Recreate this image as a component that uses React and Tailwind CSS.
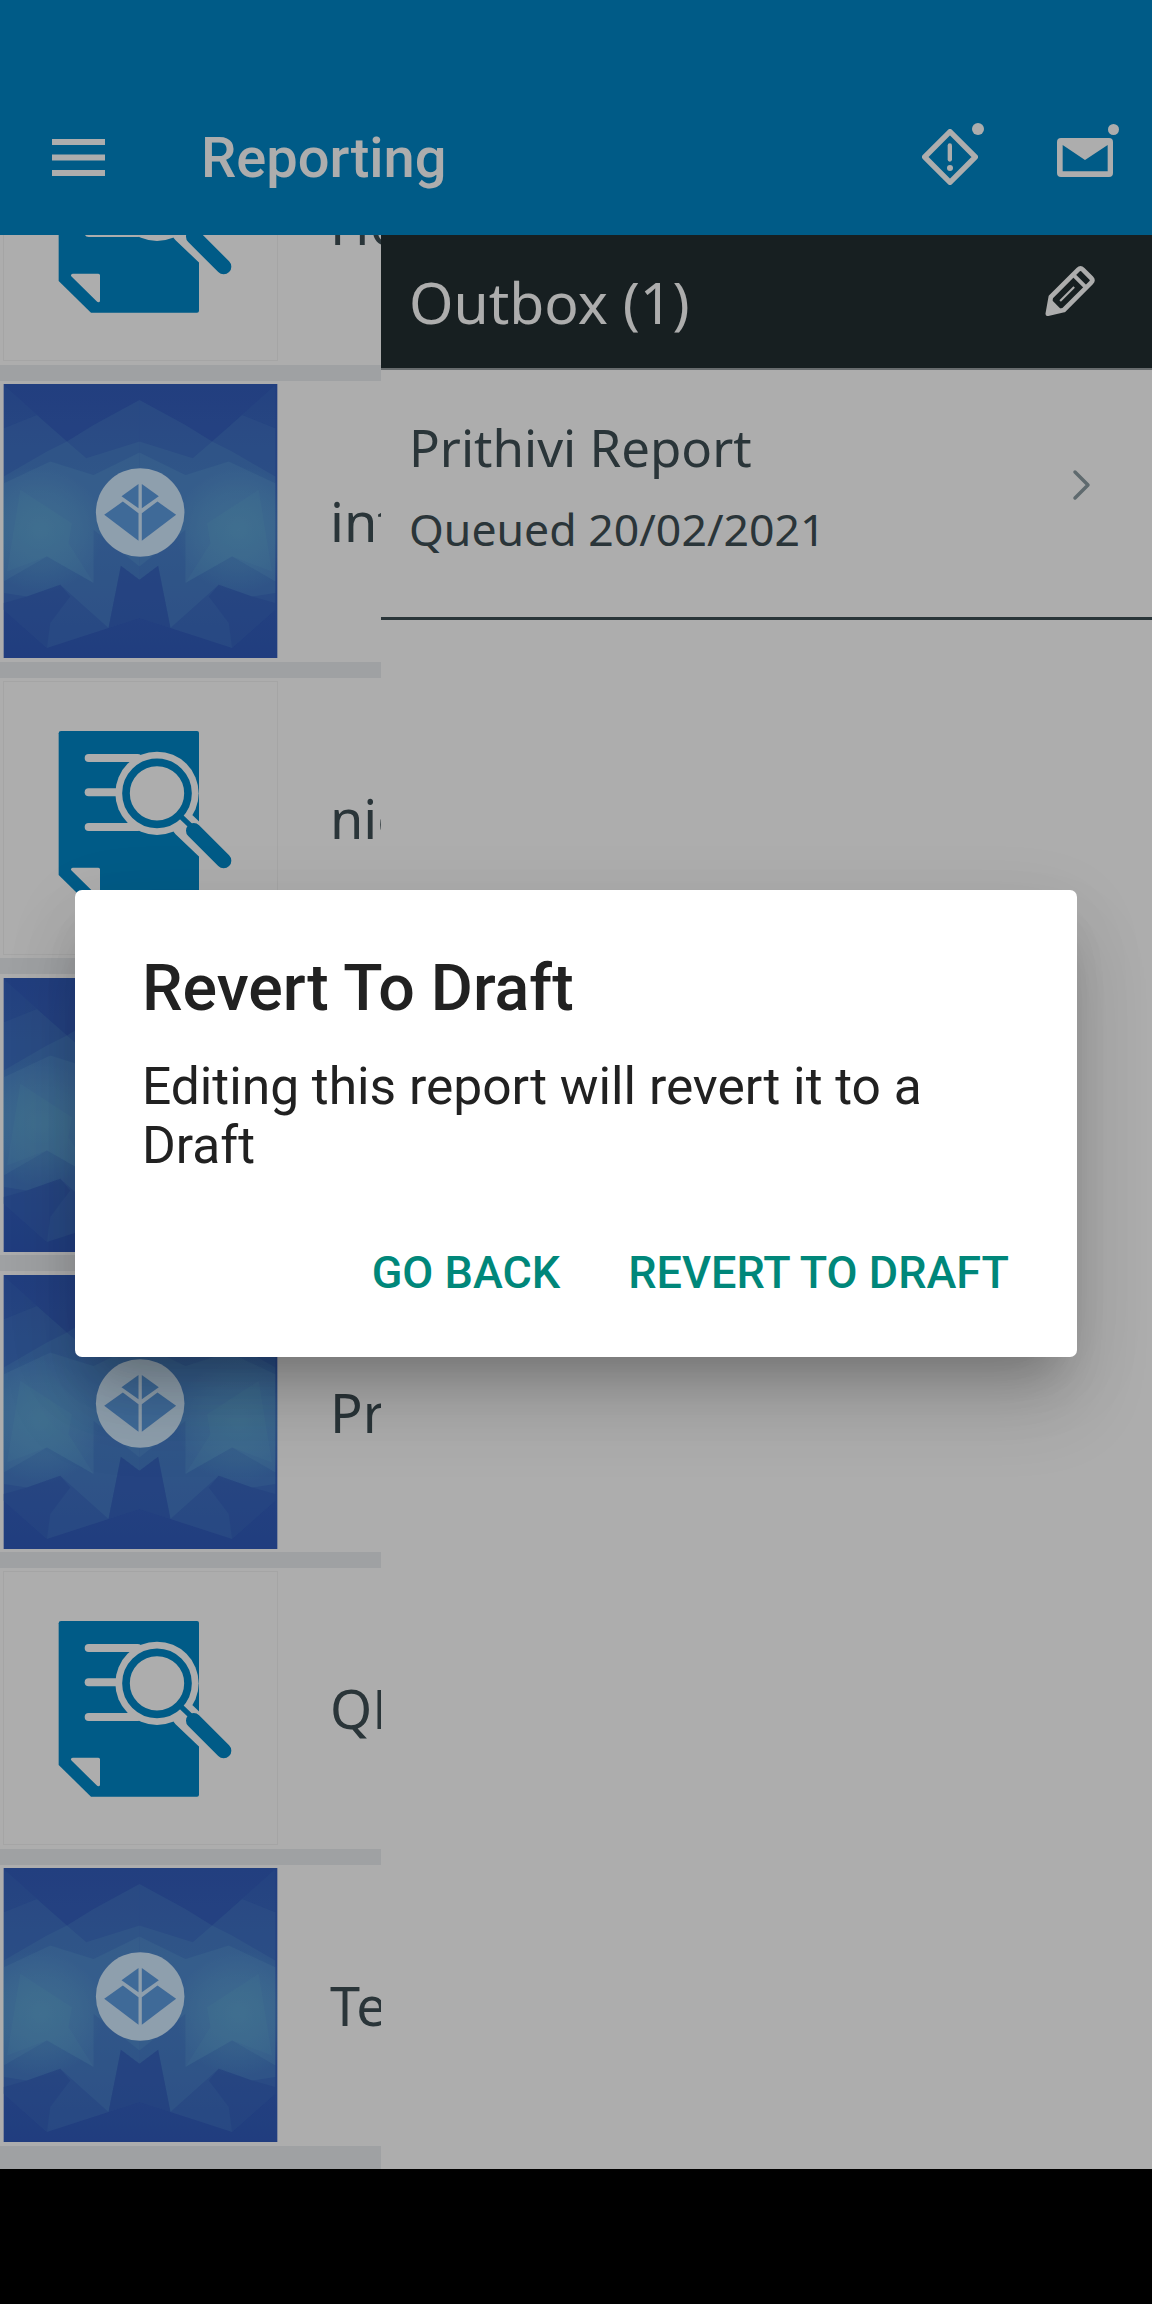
const BG = "#0087c7";

function rowsData() {
  return [
    { kind: "doc", name: "Home Report" },
    { kind: "img", name: "internal" },
    { kind: "doc", name: "nick" },
    { kind: "img", name: "Mine" },
    { kind: "img", name: "Prithivi" },
    { kind: "doc", name: "QR Report" },
    { kind: "img", name: "Test" },
  ];
}

const FACETS = [
  { p: "418,60 280,135 200,185 110,105 10,145 10,690 140,805 325,745 418,715", f: "#7fd0e8", o: 0.13 },
  { p: "418,185 258,235 200,185 140,215 10,290 10,640 80,650 180,615 325,745 362,558 418,600", f: "#7fd0e8", o: 0.13 },
  { p: "418,218 280,285 150,245 10,310 10,605 140,530 280,610 280,450 418,560", f: "#7fd0e8", o: 0.14 },
  { p: "20,575 60,330 215,430 205,490 280,610 140,530", f: "#7fd8e0", o: 0.08 },
  { p: "418,600 362,558 325,745 418,715", f: "#2f56b8", o: 0.45 },
  { p: "10,690 140,805 150,730 210,650 180,615 80,650 10,670", f: "#2f56b8", o: 0.35 },
  { p: "10,15 200,185 110,105 10,145", f: "#7fd0e8", o: 0.05 },
];

function Cover() {
  return (
    <svg viewBox="10 12 822 823" className="w-[275px] h-[274px] block shrink-0">
      <defs>
        <linearGradient id="covbase" x1="0" y1="0" x2="0" y2="1">
          <stop offset="0" stopColor="#335dbc" />
          <stop offset="0.5" stopColor="#3a68c2" />
          <stop offset="1" stopColor="#315bbb" />
        </linearGradient>
        <radialGradient id="covglow">
          <stop offset="0" stopColor="#7fd8e0" stopOpacity="0.26" />
          <stop offset="0.6" stopColor="#7fd8e0" stopOpacity="0.14" />
          <stop offset="1" stopColor="#7fd8e0" stopOpacity="0" />
        </radialGradient>
      </defs>
      <rect x="10" y="12" width="822" height="823" fill="url(#covbase)" />
      {FACETS.map((f, i) => (
        <polygon key={i} points={f.p} fill={f.f} fillOpacity={f.o} />
      ))}
      <g transform="translate(836 0) scale(-1 1)">
        {FACETS.map((f, i) => (
          <polygon key={i} points={f.p} fill={f.f} fillOpacity={f.o} />
        ))}
      </g>
      <ellipse cx="120" cy="450" rx="190" ry="190" fill="url(#covglow)" />
      <ellipse cx="716" cy="450" rx="190" ry="190" fill="url(#covglow)" />
      <circle cx="420" cy="398" r="133" fill="#d2eaff" />
      <g fill="#5d9ce0">
        <polygon points="364,349 415,312 415,385" />
        <polygon points="476,349 425,312 425,385" />
        <polygon points="312,405 368,365 415,400 415,483" />
        <polygon points="528,405 472,365 425,400 425,483" />
      </g>
    </svg>
  );
}

function DocIcon() {
  const bg = "#ffffff";
  return (
    <svg viewBox="0 0 600 660" className="w-[200px] h-[220px] block">
      <path d="M60 63H468q6 0 6 6V584q0 6-6 6H150L53 495V70q0-7 7-7z" fill={BG} />
      <polygon points="95,478 172,478 172,554" fill={bg} stroke={bg} strokeWidth="10" strokeLinejoin="round" />
      <g stroke={bg} strokeWidth="24" strokeLinecap="round">
        <line x1="143" y1="144" x2="290" y2="144" />
        <line x1="143" y1="247" x2="250" y2="247" />
        <line x1="143" y1="351" x2="290" y2="351" />
      </g>
      <circle cx="348" cy="250" r="125" fill={bg} />
      <line x1="430" y1="345" x2="545" y2="455" stroke={bg} strokeWidth="76" strokeLinecap="round" />
      <circle cx="348" cy="250" r="93" fill="none" stroke={BG} strokeWidth="23" />
      <line x1="420" y1="320" x2="460" y2="358" stroke={BG} strokeWidth="16" />
      <line x1="458" y1="362" x2="548" y2="452" stroke={BG} strokeWidth="46" strokeLinecap="round" />
    </svg>
  );
}

function Row({ item, last }) {
  return (
    <div className="flex flex-col shrink-0">
      <div className="h-[280.8px] flex items-center pl-[3px] shrink-0">
        {item.kind === "img" ? (
          <Cover />
        ) : (
          <div className="w-[275px] h-[274px] border border-[#f3f3f3] flex items-center justify-center shrink-0">
            <div className="mt-[4px]">
              <DocIcon />
            </div>
          </div>
        )}
        <span className="ml-[52px] shrink-0 whitespace-nowrap text-[54px] leading-[60px] text-[#3e4e54] font-['Noto_Sans',sans-serif]">
          {item.name}
        </span>
      </div>
      <div className={`${last ? "h-[24px]" : "h-[16px]"} bg-[#ebedf0]`} />
    </div>
  );
}

function Hamburger() {
  return (
    <svg viewBox="0 0 53 37" className="w-[53px] h-[37px] block" fill="#ffffff">
      <rect x="0" y="0" width="53" height="6" />
      <rect x="0" y="15.5" width="53" height="6" />
      <rect x="0" y="31" width="53" height="6" />
    </svg>
  );
}

function AlertIcon() {
  return (
    <div className="relative w-[56px] h-[56px]">
      <svg viewBox="187 87 168 168" className="w-[56px] h-[56px] block">
        <polygon points="271,95 347,171 271,247 195,171" fill="none" stroke="#ffffff" strokeWidth="16" strokeLinejoin="round" />
        <rect x="264" y="130" width="13" height="55" rx="6.5" fill="#ffffff" />
        <circle cx="271" cy="204" r="9" fill="#ffffff" />
      </svg>
      <span className="absolute left-[50px] top-[-6px] w-[11.5px] h-[11.5px] rounded-full bg-white" />
    </div>
  );
}

function MailIcon() {
  return (
    <div className="relative w-[56px] h-[39px]">
      <svg viewBox="590 112 168 117" className="w-[56px] h-[39px] block">
        <path
          fillRule="evenodd"
          fill="#ffffff"
          d="M602 112H746Q758 112 758 124V217Q758 229 746 229H602Q590 229 590 217V124Q590 112 602 112ZM607 133V212H742V133L674 178Z"
        />
      </svg>
      <span className="absolute right-[-6px] top-[-14px] w-[11.5px] h-[11.5px] rounded-full bg-white" />
    </div>
  );
}

function PencilIcon() {
  return (
    <svg viewBox="553 497 152 153" className="w-[51px] h-[51px] block mb-[22px]">
      <path
        d="M561 643L570 593L652 511Q659 504 666 511L691 536Q698 543 691 550L609 632Z"
        fill="none"
        stroke="#ffffff"
        strokeWidth="14"
        strokeLinejoin="round"
      />
      <line x1="637" y1="526" x2="676" y2="565" stroke="#ffffff" strokeWidth="12" />
      <polygon points="555,648 567,596 605,634" fill="#ffffff" />
      <line x1="598" y1="605" x2="640" y2="563" stroke="#ffffff" strokeWidth="6" />
    </svg>
  );
}

export default function App() {
  const rows = rowsData();
  return (
    <div className="relative w-[1152px] h-[2304px] overflow-hidden bg-white flex flex-col font-['Roboto',sans-serif]">
      <header className="h-[235px] shrink-0 bg-[#0087c7] pt-[79px]">
        <div className="h-[156px] flex items-center pl-[52px] pr-[39px]">
          <Hamburger />
          <h1 className="ml-[96px] mt-[2px] text-[56px] leading-[60px] font-medium text-white">Reporting</h1>
          <div className="ml-auto flex items-center gap-[79px]">
            <AlertIcon />
            <MailIcon />
          </div>
        </div>
      </header>

      <main className="flex-1 min-h-0 flex">
        <div className="w-[381px] shrink-0 overflow-hidden">
          <div className="mt-[-151px] flex flex-col">
            {rows.map((r, i) => (
              <Row key={i} item={r} last={i === rows.length - 1} />
            ))}
          </div>
        </div>
        <section className="flex-1 flex flex-col font-['Noto_Sans',sans-serif]">
          <div className="h-[135px] shrink-0 bg-[#232f32] border-b-2 border-[#9aa0a2] flex items-center justify-between pl-[28px] pr-[56px]">
            <span className="text-[57px] leading-[60px] text-white">Outbox (1)</span>
            <PencilIcon />
          </div>
          <div className="h-[250px] shrink-0 flex items-center justify-between pl-[28px] pr-[60px] pb-[14px] border-b-[3px] border-[#3e4e54]">
            <div className="flex flex-col text-[#3e4e54]">
              <span className="text-[51px] leading-[60px]">Prithivi Report</span>
              <span className="text-[44.6px] leading-[56px] mt-[24px]">Queued 20/02/2021</span>
            </div>
            <svg viewBox="0 0 20 32" className="w-[20px] h-[32px] block mb-[4px]">
              <polyline points="3,3 16,16 3,29" fill="none" stroke="#8c9da3" strokeWidth="3.5" strokeLinecap="round" strokeLinejoin="round" />
            </svg>
          </div>
        </section>
      </main>

      <div className="h-[135px] shrink-0 bg-black" />

      <div className="absolute inset-0 bg-black/32 flex justify-center items-start pt-[890px]">
        <div className="w-[1002px] h-[467px] bg-white rounded-[7px] pl-[67px] pr-[68px] flex flex-col shadow-[0_32px_44px_-20px_rgba(0,0,0,0.2),0_50px_80px_0px_rgba(0,0,0,0.12),0_20px_80px_0px_rgba(0,0,0,0.08)]">
          <h2 className="mt-[60px] text-[64.5px] leading-[76px] font-medium text-[#212121]">Revert To Draft</h2>
          <p className="mt-[31px] text-[51.5px] leading-[59px] text-[#212121]">Editing this report will revert it to a Draft</p>
          <div className="mt-[73px] flex justify-end gap-[68px] text-[45px] leading-[50px] font-medium text-[#00877a]">
            <span>GO BACK</span>
            <span>REVERT TO DRAFT</span>
          </div>
        </div>
      </div>
    </div>
  );
}
